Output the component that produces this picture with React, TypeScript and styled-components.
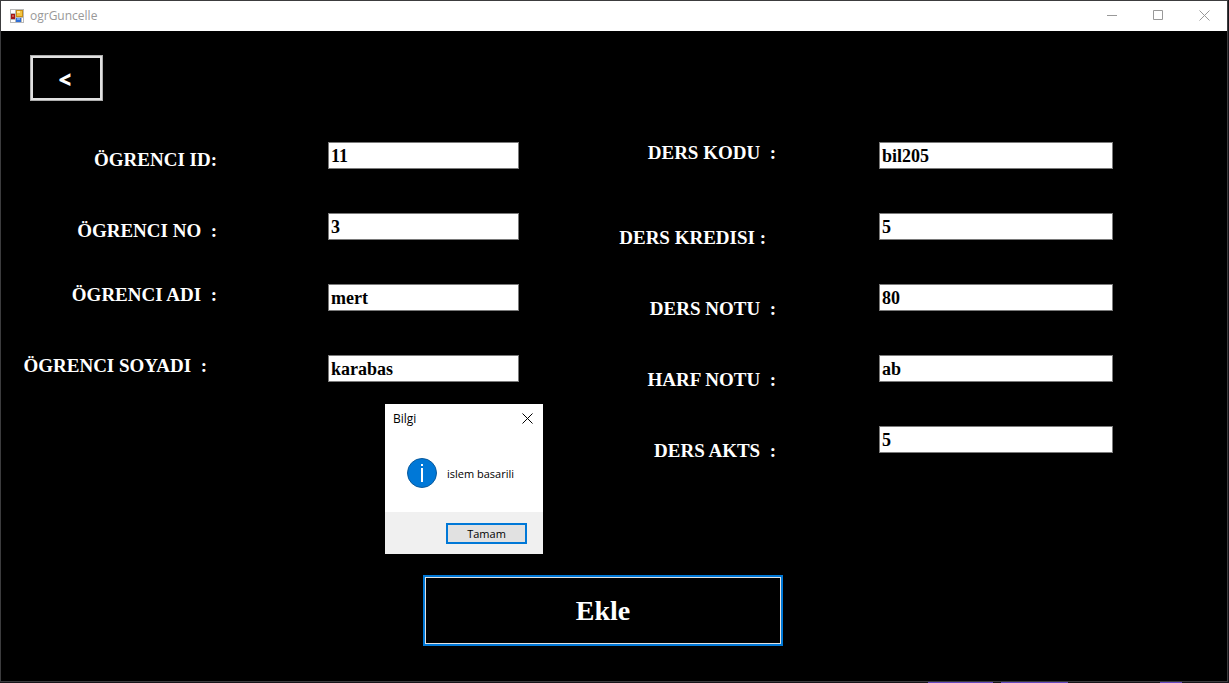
import React from 'react';
import styled, { createGlobalStyle } from 'styled-components';

const serif = '"Liberation Serif", "Times New Roman", serif';
const ui = '"Open Sans", "Segoe UI", sans-serif';

const GlobalStyle = createGlobalStyle`
  *, *::before, *::after { box-sizing: border-box; }
  body { margin: 0; background: #17151a; }
  button, input { font: inherit; margin: 0; border-radius: 0; outline: none; }
`;

const Desktop = styled.div`
  display: flex;
  flex-direction: column;
  min-height: 100vh;
  padding-right: 1px;
`;

const Window = styled.main`
  display: flex;
  flex: 1;
  flex-direction: column;
  border: 1px solid #3c3c3e;
  background: #000;
`;

const TitleBar = styled.header`
  display: flex;
  align-items: center;
  justify-content: space-between;
  height: 30px;
  padding-left: 9px;
  background: #fff;
`;

const Title = styled.h1`
  display: flex;
  align-items: center;
  gap: 6px;
  margin: 0;
  color: #999;
  font: 400 12px/16px ${ui};
`;

const WindowButtons = styled.div`
  display: flex;
`;

const WindowButton = styled.button`
  display: grid;
  place-items: center;
  width: 46px;
  height: 30px;
  padding: 0 0 2px;
  border: 0;
  background: transparent;
  color: #999;
`;

const Client = styled.section`
  position: relative;
  display: flex;
  flex: 1;
  flex-direction: column;
  align-items: flex-start;
  padding: 24px 0 35px;
`;

const BackButton = styled.button`
  width: 73px;
  height: 46px;
  margin-left: 29px;
  padding: 2px 3px 0 0;
  border: 1px solid #adadad;
  box-shadow: inset 0 0 0 2px #e1e1e1;
  background: #000;
  color: #fff;
  font: 900 22px/24px "Noto Sans", ${ui};
`;

const Form = styled.form`
  display: flex;
  flex-direction: column;
  align-items: flex-start;
  width: 100%;
  margin-top: 41px;
`;

const Columns = styled.div`
  display: grid;
  grid-template-columns: 518fr 594fr 114fr;
  width: 100%;
`;

const FieldColumn = styled.div`
  display: flex;
  flex-direction: column;
  gap: 35px;
`;

const Row = styled.div<{ $wide?: boolean }>`
  display: grid;
  grid-template-columns: ${(p) => (p.$wide ? '257fr 103fr 234fr' : '216fr 111fr 191fr')};
  align-items: start;
  height: 36px;
`;

type Level = 'high' | 'middle' | 'low';
const levelPadding: Record<Level, number> = { high: 1, middle: 8, low: 15 };

const Label = styled.label<{ $level: Level; $inset?: boolean }>`
  grid-column: 1;
  justify-self: end;
  padding-top: ${(p) => levelPadding[p.$level]}px;
  padding-right: ${(p) => (p.$inset ? 10 : 0)}px;
  color: #fff;
  font: 700 19px/20px ${serif};
  white-space: pre;
`;

const TextBox = styled.input`
  grid-column: 3;
  width: 100%;
  height: 27px;
  padding: 1px 2px 0;
  border: 1px solid #7a7a7a;
  background: #fff;
  color: #000;
  font: 700 18px/24px ${serif};
`;

const SubmitButton = styled.button`
  width: 360px;
  height: 71px;
  margin: 113px 0 0 422px;
  padding: 0;
  border: 2px solid #0078d7;
  box-shadow: inset 0 0 0 1px #e1e1e1;
  background: #000;
  color: #fff;
  font: 700 28px/32px ${serif};
`;

const MessageBox = styled.div`
  position: absolute;
  top: 373px;
  left: 384px;
  width: 158px;
  background: #fff;
  color: #000;
  font: 400 11px/16px ${ui};
`;

const MessageHeader = styled.div`
  display: flex;
  align-items: center;
  justify-content: space-between;
  height: 30px;
  padding-left: 8px;
`;

const MessageTitle = styled.h2`
  margin: 0;
  font: 400 12px/16px ${ui};
`;

const CloseButton = styled.button`
  display: grid;
  place-items: center;
  width: 31px;
  height: 30px;
  padding: 0 0 2px;
  border: 0;
  background: transparent;
  color: #000;
`;

const MessageBody = styled.div`
  display: flex;
  align-items: center;
  gap: 10px;
  height: 78px;
  padding-left: 22px;
  white-space: nowrap;
`;

const MessageText = styled.p`
  margin: 0;
  padding-top: 2px;
`;

const MessageFooter = styled.div`
  display: flex;
  align-items: center;
  justify-content: flex-end;
  height: 42px;
  padding-right: 16px;
  background: #f0f0f0;
`;

const OkButton = styled.button`
  width: 81px;
  height: 21px;
  padding: 1px 0 0;
  border: 2px solid #0078d7;
  background: #e1e1e1;
  color: #000;
  font: 400 11px/16px ${ui};
`;

const DesktopEdge = styled.div`
  display: grid;
  grid-template-columns: 928fr 65fr 8fr 67fr 92fr 22fr 46fr;
  height: 1px;
`;

const EdgeSpan = styled.span<{ $lit: boolean }>`
  background: ${(p) => (p.$lit ? '#6548c0' : 'transparent')};
`;

const FormIcon = () => (
  <svg width="14" height="14" viewBox="0 0 14 14" aria-hidden="true" shapeRendering="crispEdges">
    <rect width="14" height="14" fill="#b9b9b9" />
    <path d="M1 1h4v3H1zM1 11h4v2H1zM12 9h1v4h-1z" fill="#fff" />
    <rect x="1" y="5" width="4" height="5" fill="#a51717" />
    <rect x="2" y="6" width="2" height="2" fill="#d0584a" />
    <rect x="6" y="1" width="7" height="7" fill="#c98f14" />
    <rect x="7" y="2" width="5" height="5" fill="#f3c440" />
    <rect x="7" y="2" width="3" height="2" fill="#ffe795" />
    <rect x="6" y="9" width="5" height="4" fill="#2f6fd8" />
    <rect x="7" y="9" width="3" height="2" fill="#74a8f2" />
  </svg>
);

const MinimizeIcon = () => (
  <svg width="10" height="10" viewBox="0 0 10 10" aria-hidden="true">
    <path d="M0 5.5h10" stroke="currentColor" />
  </svg>
);

const MaximizeIcon = () => (
  <svg width="10" height="10" viewBox="0 0 10 10" aria-hidden="true">
    <path d="M.5.5h9v9h-9z" fill="none" stroke="currentColor" />
  </svg>
);

const CrossIcon = () => (
  <svg width="11" height="11" viewBox="0 0 11 11" aria-hidden="true">
    <path d="M.5.5l10 10M10.5.5l-10 10" stroke="currentColor" />
  </svg>
);

const InfoIcon = () => (
  <svg width="30" height="30" viewBox="0 0 30 30" aria-hidden="true">
    <circle cx="15" cy="15" r="14.5" fill="#0078d7" stroke="#0a5a9c" />
    <path d="M14 6h2v2h-2zM14 10h2v14h-2z" fill="#fff" />
  </svg>
);

interface Field {
  id: string;
  label: string;
  value: string;
  level: Level;
  inset?: boolean;
}

const studentFields: Field[] = [
  { id: 'ogrenci-id', label: 'ÖGRENCI ID:', value: '11', level: 'middle' },
  { id: 'ogrenci-no', label: 'ÖGRENCI NO  :', value: '3', level: 'middle' },
  { id: 'ogrenci-adi', label: 'ÖGRENCI ADI  :', value: 'mert', level: 'high' },
  { id: 'ogrenci-soyadi', label: 'ÖGRENCI SOYADI  :', value: 'karabas', level: 'high', inset: true },
];

const courseFields: Field[] = [
  { id: 'ders-kodu', label: 'DERS KODU  :', value: 'bil205', level: 'high' },
  { id: 'ders-kredisi', label: 'DERS KREDISI :', value: '5', level: 'low', inset: true },
  { id: 'ders-notu', label: 'DERS NOTU  :', value: '80', level: 'low' },
  { id: 'harf-notu', label: 'HARF NOTU  :', value: 'ab', level: 'low' },
  { id: 'ders-akts', label: 'DERS AKTS  :', value: '5', level: 'low' },
];

const Fields = ({ fields, wide }: { fields: Field[]; wide?: boolean }) => (
  <FieldColumn>
    {fields.map((f) => (
      <Row key={f.id} $wide={wide}>
        <Label htmlFor={f.id} $level={f.level} $inset={f.inset}>
          {f.label}
        </Label>
        <TextBox id={f.id} type="text" defaultValue={f.value} />
      </Row>
    ))}
  </FieldColumn>
);

export default function App() {
  return (
    <Desktop>
      <GlobalStyle />
      <Window>
        <TitleBar>
          <Title>
            <FormIcon />
            ogrGuncelle
          </Title>
          <WindowButtons>
            <WindowButton type="button" aria-label="Simge durumuna küçült">
              <MinimizeIcon />
            </WindowButton>
            <WindowButton type="button" aria-label="Ekranı kapla">
              <MaximizeIcon />
            </WindowButton>
            <WindowButton type="button" aria-label="Kapat">
              <CrossIcon />
            </WindowButton>
          </WindowButtons>
        </TitleBar>
        <Client>
          <BackButton type="button">&lt;</BackButton>
          <Form onSubmit={(e) => e.preventDefault()}>
            <Columns>
              <Fields fields={studentFields} />
              <Fields fields={courseFields} wide />
            </Columns>
            <SubmitButton type="submit">Ekle</SubmitButton>
          </Form>
          <MessageBox role="dialog" aria-labelledby="message-title">
            <MessageHeader>
              <MessageTitle id="message-title">Bilgi</MessageTitle>
              <CloseButton type="button" aria-label="Kapat">
                <CrossIcon />
              </CloseButton>
            </MessageHeader>
            <MessageBody>
              <InfoIcon />
              <MessageText>islem basarili</MessageText>
            </MessageBody>
            <MessageFooter>
              <OkButton type="button">Tamam</OkButton>
            </MessageFooter>
          </MessageBox>
        </Client>
      </Window>
      <DesktopEdge>
        {[false, true, false, true, false, true, false].map((lit, i) => (
          <EdgeSpan key={i} $lit={lit} />
        ))}
      </DesktopEdge>
    </Desktop>
  );
}
